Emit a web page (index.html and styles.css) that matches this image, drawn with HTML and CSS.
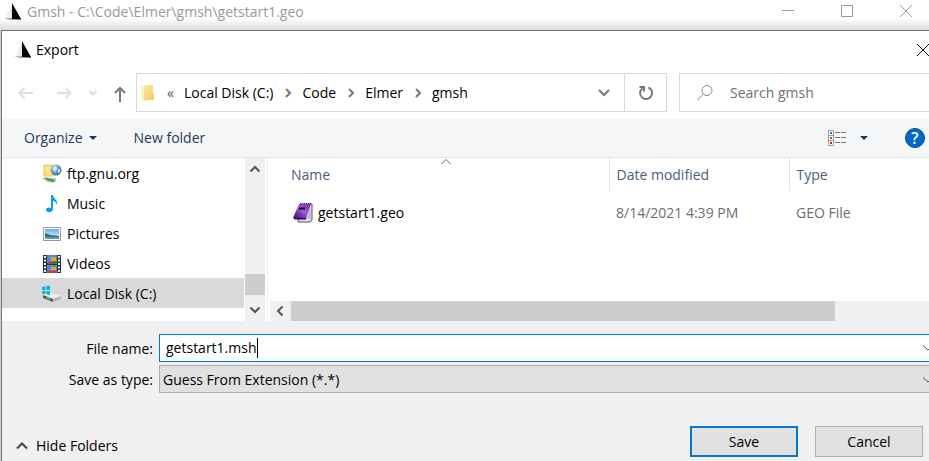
FILE: index.html
```html
<!DOCTYPE html>
<html lang="en">
<head>
<meta charset="utf-8">
<title>Gmsh - Export</title>
<link rel="stylesheet" href="styles.css">
</head>
<body>
<svg class="defs" aria-hidden="true">
  <defs>
    <linearGradient id="sail" x1="0" x2="1" y1="0" y2="0"><stop offset="0" stop-color="#fff"/><stop offset="1" stop-color="#e2e2e2"/></linearGradient>
    <linearGradient id="base" x1="0" x2="1" y1="0" y2="0"><stop offset="0" stop-color="#ddd"/><stop offset="1" stop-color="#333"/></linearGradient>
    <linearGradient id="gold" x1="0" x2="1" y1="0" y2="1"><stop offset="0" stop-color="#ffe9a6"/><stop offset="1" stop-color="#f3cb5c"/></linearGradient>
    <linearGradient id="purple" x1="1" x2="0" y1="0" y2="1"><stop offset="0" stop-color="#7a2bb0"/><stop offset=".45" stop-color="#9d5cc8"/><stop offset="1" stop-color="#3d0078"/></linearGradient>
    <linearGradient id="sky" x1="0" x2="0" y1="0" y2="1"><stop offset="0" stop-color="#6fb0e6"/><stop offset="1" stop-color="#e6f5fb"/></linearGradient>
    <radialGradient id="globe" cx=".35" cy=".3" r=".8"><stop offset="0" stop-color="#b9e2f5"/><stop offset="1" stop-color="#1d609b"/></radialGradient>
    <symbol id="gmsh" viewBox="0 0 18 18">
      <path d="M9 0 0 15l9 1z" fill="url(#sail)"/><path d="M0 15l17 .5v1.300H4z" fill="url(#base)"/><path d="M8 0v16h9z" fill="#020a04"/>
    </symbol>
  </defs>
</svg>

<header class="app-bar">
  <svg class="logo" aria-hidden="true"><use href="#gmsh"/></svg>
  <span class="app-title">Gmsh - C:\Code\Elmer\gmsh\getstart1.geo</span>
  <div class="window-controls">
    <button aria-label="Minimize"><svg width="14" height="14" viewBox="0 0 14 14"><path d="M1 6.500h12" /></svg></button>
    <button aria-label="Maximize"><svg width="14" height="14" viewBox="0 0 14 14"><path d="M1.500 1.500h11v11h-11z"/></svg></button>
    <button aria-label="Close"><svg width="14" height="14" viewBox="0 0 14 14"><path d="M1 1l12 12M13 1 1 13"/></svg></button>
  </div>
</header>

<main class="dialog">
  <div class="dialog-title">
    <svg class="logo" aria-hidden="true"><use href="#gmsh"/></svg>
    <h1>Export</h1>
    <button class="dialog-close" aria-label="Close dialog"><svg width="14" height="14" viewBox="0 0 14 14"><path d="M1 1l12 12M13 1 1 13"/></svg></button>
  </div>

  <nav class="nav-row" aria-label="Location">
    <div class="history">
      <button class="dim" aria-label="Back"><svg width="16" height="16" viewBox="0 0 16 16"><path d="M15 8H1.500M6.500 3l-5 5 5 5"/></svg></button>
      <button class="dim" aria-label="Forward"><svg width="16" height="16" viewBox="0 0 16 16"><path d="M1 8h13.500M9.500 3l5 5-5 5"/></svg></button>
      <button class="dim" aria-label="Recent locations"><svg width="10" height="16" viewBox="0 0 10 16"><path d="M1.500 6 5 9.500 8.500 6"/></svg></button>
      <button aria-label="Up"><svg width="14" height="18" viewBox="0 0 14 18"><path d="M6 18V4M1 9l5-5 5 5"/></svg></button>
    </div>
    <div class="address">
      <svg class="folder" width="14" height="18" viewBox="0 0 14 18"><path d="M3 1h9v8l1 1v6H3z" fill="url(#gold)"/><path d="M0 1l4 2v14l-4-2z" fill="#fff0bf"/><path d="M4 3v14" stroke="#efcf78" fill="none"/></svg>
      <span class="overflow">«</span>
      <a href="#">Local Disk (C:)</a>
      <svg class="sep" width="6" height="10" viewBox="0 0 6 10"><path d="M1 1l4 4-4 4"/></svg>
      <a href="#">Code</a>
      <svg class="sep" width="6" height="10" viewBox="0 0 6 10"><path d="M1 1l4 4-4 4"/></svg>
      <a href="#">Elmer</a>
      <svg class="sep" width="6" height="10" viewBox="0 0 6 10"><path d="M1 1l4 4-4 4"/></svg>
      <a href="#">gmsh</a>
      <button class="history-toggle" aria-label="Previous locations"><svg width="12" height="8" viewBox="0 0 12 8"><path d="M1 1l5 5 5-5"/></svg></button>
      <button class="refresh" aria-label="Refresh"><svg width="16" height="16" viewBox="0 0 16 16"><path d="M10.500 2.500A6 6 0 1 1 4.500 3.200M1.500 2H6v4.500"/></svg></button>
    </div>
    <label class="search">
      <svg width="18" height="18" viewBox="0 0 18 18"><circle cx="11" cy="6.500" r="5"/><path d="M7.500 10 1.500 16"/></svg>
      <input type="search" placeholder="Search gmsh" aria-label="Search gmsh">
    </label>
  </nav>

  <div class="toolbar">
    <button class="organize">Organize<svg width="8" height="4" viewBox="0 0 8 4"><path d="M0 0h8L4 4z" fill="#17375e"/></svg></button>
    <button>New folder</button>
    <button class="view" aria-label="Change view">
      <svg width="18" height="16" viewBox="0 0 18 16"><path d="M.5.500h5v15h-5zM.5 5.500h5M.5 10.500h5" fill="#fff" stroke="#999"/><path d="M7 2.500h5m1 0h5M7 7.500h5m1 0h5M7 12.500h5m1 0h5" stroke="#777"/><path d="M2 2h2v2H2z" fill="#2877a8"/><path d="M2 7h2v2H2z" fill="#8a6848"/><path d="M2 12h2v2H2z" fill="#c62014"/></svg>
      <svg width="8" height="4" viewBox="0 0 8 4"><path d="M0 0h8L4 4z" fill="#17375e"/></svg>
    </button>
    <button class="help" aria-label="Help">?</button>
  </div>

  <div class="browser">
    <ul class="tree">
      <li><svg width="20" height="20" viewBox="0 0 20 20"><path d="M2 1h9v11H2z" fill="#fbe38e" stroke="#e9c65c"/><circle cx="14" cy="6" r="5.500" fill="url(#globe)"/><path d="M11 4l3-2 1 3-2 3zM16 6l2-1v3l-2 1z" fill="#d8f0f5"/><path d="M0 14l5-1 2 1h7v2l-3 3-5-1-4-2z" fill="#ccc"/><path d="M2 14h4l5 1 3 2-3 1-5-1z" fill="#35b33d"/></svg>ftp.gnu.org</li>
      <li><svg width="20" height="20" viewBox="0 0 20 20"><path d="M9 1h2c0 4 5 4 4 10-1-3-2-4-4-4v8c0 4-7 4-7 1 0-3 3-3 5-2z" fill="#0c9bf2"/></svg>Music</li>
      <li><svg width="20" height="20" viewBox="0 0 20 20"><path d="M1.500 3.500h17v13h-17z" fill="#fff" stroke="#999"/><path d="M3 5h14v10H3z" fill="url(#sky)"/><path d="M3 9l5 2 9 1v3H3z" fill="#2e6f77"/><path d="M3 13l14 0v2H3z" fill="#6397b6"/></svg>Pictures</li>
      <li><svg width="20" height="20" viewBox="0 0 20 20"><path d="M1 1h18v18H1z" fill="#333"/><path d="M5 1h10v8H5zM5 11h10v8H5z" fill="#5187dc"/><path d="M9 3h5v4H9zM9 13h5v3H9z" fill="#e5ab22"/><path d="M6 8h4v2H6zM6 17h8v2H6z" fill="#d43b22"/><path d="M10 7h5v3h-5z" fill="#318539"/><path d="M3 2v17M17 2v17" stroke="#eee" stroke-width="2" stroke-dasharray="2 1.500" fill="none"/></svg>Videos</li>
      <li class="selected"><svg width="20" height="20" viewBox="0 0 20 20"><path d="M1 11l8-2 10 3-8 4z" fill="#ececec"/><path d="M1 11l10 4v3l-10-4z" fill="#555"/><path d="M11 15l8-3v3l-8 3z" fill="#b5b5b5"/><path d="M4 13.500l4 1.500" stroke="#54c653" stroke-width="1.500"/><path d="M0 3l3.500-.7V6H0zM4.500 2 8 1.500V6H4.500zM0 7h3.500v3.200L0 9.600zM4.500 7H8v4l-3.500-.5z" fill="#00b4f0"/></svg>Local Disk (C:)</li>
    </ul>
    <div class="v-scroll" aria-hidden="true">
      <svg width="12" height="8" viewBox="0 0 12 8"><path d="M1.500 6.500 6 2l4.500 4.500"/></svg>
      <div class="v-thumb"></div>
      <svg width="12" height="8" viewBox="0 0 12 8"><path d="M1.500 1.500 6 6l4.500-4.500"/></svg>
    </div>
    <section class="files">
      <svg class="sort" width="10" height="6" viewBox="0 0 10 6"><path d="M.5 5 5 .5 9.500 5"/></svg>
      <table>
        <colgroup><col class="col-name"><col class="col-date"><col></colgroup>
        <thead><tr><th>Name</th><th>Date modified</th><th>Type</th></tr></thead>
        <tbody><tr>
          <td class="file"><div><svg width="20" height="20" viewBox="0 0 20 20"><path d="M7 1h12v16l-2 2H5z" fill="#e5dcef" stroke="#555"/><path d="M13 7h5M13 9h5M12 11h6M12 13h6M11 15h7" stroke="#a89abb"/><path d="M6 1h12l-5 14H0z" fill="url(#purple)"/><path d="M0 15h13v1.500H2z" fill="#37006f"/><path d="M7 .500h12" stroke="#453052" stroke-dasharray="1 1"/><path d="M6 5.500h6" stroke="#17032b" stroke-width="2"/></svg>getstart1.geo</div></td>
          <td>8/14/2021 4:39 PM</td><td>GEO File</td>
        </tr></tbody>
      </table>
      <div class="h-scroll" aria-hidden="true">
        <svg width="8" height="12" viewBox="0 0 8 12"><path d="M6.500 1.500 2 6l4.500 4.500"/></svg>
        <div class="h-thumb"></div>
      </div>
    </section>
  </div>

  <form class="save-form">
    <label for="file-name">File name:</label>
    <div class="field name-field">
      <input id="file-name" type="text" value="getstart1.msh"><span class="caret"></span>
      <svg width="12" height="8" viewBox="0 0 12 8"><path d="M1 1.500 6 6l5-4.500"/></svg>
    </div>
    <label for="file-type">Save as type:</label>
    <div class="field type-field">
      <select id="file-type"><option>Guess From Extension (*.*)</option></select>
      <svg width="12" height="8" viewBox="0 0 12 8"><path d="M1 1.500 6 6l5-4.500"/></svg>
    </div>
  </form>

  <footer class="actions">
    <button class="hide-folders"><svg width="12" height="8" viewBox="0 0 12 8"><path d="M1 6.500 6 1.500l5 5"/></svg>Hide Folders</button>
    <button class="push primary">Save</button>
    <button class="push">Cancel</button>
  </footer>
</main>
</body>
</html>
```
FILE: styles.css
```css
* { box-sizing: border-box; }

body {
  margin: 0;
  min-height: 100vh;
  display: flex;
  flex-direction: column;
  overflow: hidden;
  background: #d4d4d4;
  color: #000;
  font: 14px/20px "Open Sans", "Noto Sans", sans-serif;
}

.defs { position: absolute; width: 0; height: 0; }

svg { display: block; flex: none; fill: none; stroke: none; }

button, input, select {
  margin: 0;
  padding: 0;
  border: 0;
  border-radius: 0;
  outline: 0;
  background: none;
  color: inherit;
  font: inherit;
}

a { color: inherit; text-decoration: none; }

.logo { width: 18px; height: 18px; }

.app-bar {
  height: 30px;
  display: flex;
  align-items: flex-start;
  gap: 5px;
  padding: 3px 16px 0 4px;
  background: linear-gradient(#fff 18px, #dcdcdc);
}

.app-title { flex: 1; color: #999; line-height: 18px; }

.window-controls { display: flex; gap: 45px; padding-top: 1px; }
.window-controls svg { stroke: #999; }

.dialog {
  flex: 1;
  display: flex;
  flex-direction: column;
  margin-left: 1px;
  border-top: 1px solid #707070;
  border-left: 1px solid #707070;
  background: #fff;
  overflow: hidden;
}

.dialog-title {
  height: 42px;
  display: flex;
  align-items: center;
  gap: 4px;
  padding: 0 0 4px 12px;
}

.dialog-title h1 { flex: 1; margin: 0; font-size: 14px; font-weight: 400; }
.dialog-close { margin-right: -1px; }
.dialog-close svg { stroke: #111; }

.nav-row { display: flex; height: 46px; padding-bottom: 7px; }

.history { display: flex; align-items: center; width: 134px; padding-left: 16px; gap: 22px; }
.history svg { stroke: #777; stroke-width: 2; }
.history .dim svg { stroke: #ddd; }
.history button:nth-child(3) { margin: 0 -6px; }

.address {
  flex: 525 1 0;
  display: flex;
  align-items: center;
  border: 1px solid #d9d9d9;
  padding-left: 4px;
}

.overflow { margin: 0 10px 0 12px; color: #555; }
.sep { margin: 0 11px 0 12px; }
.sep path { stroke: #777; stroke-width: 2; }
.history-toggle { margin: 0 14px 0 auto; }
.history-toggle svg { stroke: #777; stroke-width: 2; }

.refresh {
  align-self: stretch;
  width: 42px;
  display: grid;
  place-items: center;
  border-left: 1px solid #d9d9d9;
}
.refresh svg { stroke: #777; stroke-width: 2; }

.search {
  flex: 233 1 0;
  display: flex;
  align-items: center;
  gap: 16px;
  margin-left: 12px;
  padding-left: 16px;
  border: 1px solid #d9d9d9;
  border-right: 0;
}
.search svg { stroke: #8a8a8a; }
.search input { flex: 1; min-width: 0; appearance: none; }
.search input::placeholder { color: #707070; opacity: 1; }

.toolbar {
  height: 39px;
  display: flex;
  align-items: center;
  gap: 37px;
  padding: 0 4px 0 22px;
  border-bottom: 1px solid #e5e5e7;
  background: #f5f6f8;
  color: #1e395b;
}
.organize { display: flex; align-items: center; gap: 6px; }
.view { display: flex; align-items: center; gap: 14px; margin-left: auto; }
.help {
  width: 20px;
  height: 20px;
  border: 1px solid #084c91;
  border-radius: 50%;
  background: #0067cb;
  color: #fff;
  font-size: 16px;
  font-weight: 600;
  line-height: 18px;
}

.browser { display: flex; height: 163px; }

.tree { width: 242px; margin: 0; padding: 0; list-style: none; }
.tree li {
  display: flex;
  align-items: center;
  gap: 5px;
  height: 30px;
  padding: 1px 0 0 40px;
}
.tree .selected { background: #d9d9d9; }

.v-scroll {
  width: 20px;
  display: flex;
  flex-direction: column;
  align-items: center;
  margin-left: 1px;
  padding: 7px 0;
  background: #f0f0f0;
}
.v-scroll svg, .h-scroll svg { stroke: #555; stroke-width: 2; }
.v-thumb { width: 20px; height: 21px; margin: auto 0 11px; background: #cdcdcd; }

.files {
  position: relative;
  flex: 1;
  display: flex;
  flex-direction: column;
  justify-content: space-between;
  margin-left: 2px;
  border-left: 1px solid #f0f0f0;
}
.sort { position: absolute; left: 173px; top: 1px; }
.sort path { stroke: #666; }

table { width: 100%; table-layout: fixed; border-collapse: collapse; }
.col-name { width: 341px; }
.col-date { width: 180px; }
th, td { padding: 0 0 0 7px; text-align: left; font-weight: 400; }
th { height: 33px; border-left: 1px solid #e5e5e5; color: #4c607a; }
th:first-child { border-left: 0; padding-left: 23px; }
td { height: 44px; color: #6d6d6d; }
.file { padding-left: 25px; color: #000; }
.file div { display: flex; align-items: center; gap: 5px; }

.h-scroll {
  height: 20px;
  display: flex;
  align-items: center;
  margin-left: 2px;
  padding-left: 6px;
  background: #f0f0f0;
}
.h-thumb { width: 85%; height: 20px; max-width: 544px; margin-left: 7px; background: #cdcdcd; }

.save-form {
  display: grid;
  grid-template-columns: 151px 1fr;
  grid-auto-rows: 28px;
  gap: 3px 6px;
  align-items: center;
  padding-top: 13px;
  background: #f0f0f0;
}
.save-form label { padding-top: 2px; text-align: right; }

.field {
  display: flex;
  align-items: center;
  align-self: stretch;
  border: 1px solid #adadad;
  border-right: 0;
  overflow: hidden;
}
.field svg { margin: 0 -5px 0 auto; stroke: #555; }
.name-field { border-color: #0078d7; background: #fff; padding-left: 6px; }
.name-field input { field-sizing: content; }
.caret { width: 1px; height: 20px; background: #000; }
.type-field { background: #e1e1e1; padding: 1px 0 0 3px; }
.type-field select { flex: 1; appearance: none; }

.actions {
  flex: 1;
  display: flex;
  align-items: flex-end;
  gap: 17px;
  padding: 0 6px 4px 14px;
  background: #f0f0f0;
}
.hide-folders { display: flex; align-items: center; gap: 8px; margin-right: auto; height: 22px; }
.hide-folders svg { stroke: #444; stroke-width: 2; }
.push { width: 108px; height: 31px; border: 1px solid #adadad; background: #e1e1e1; }
.primary { border: 2px solid #0078d7; }
```
